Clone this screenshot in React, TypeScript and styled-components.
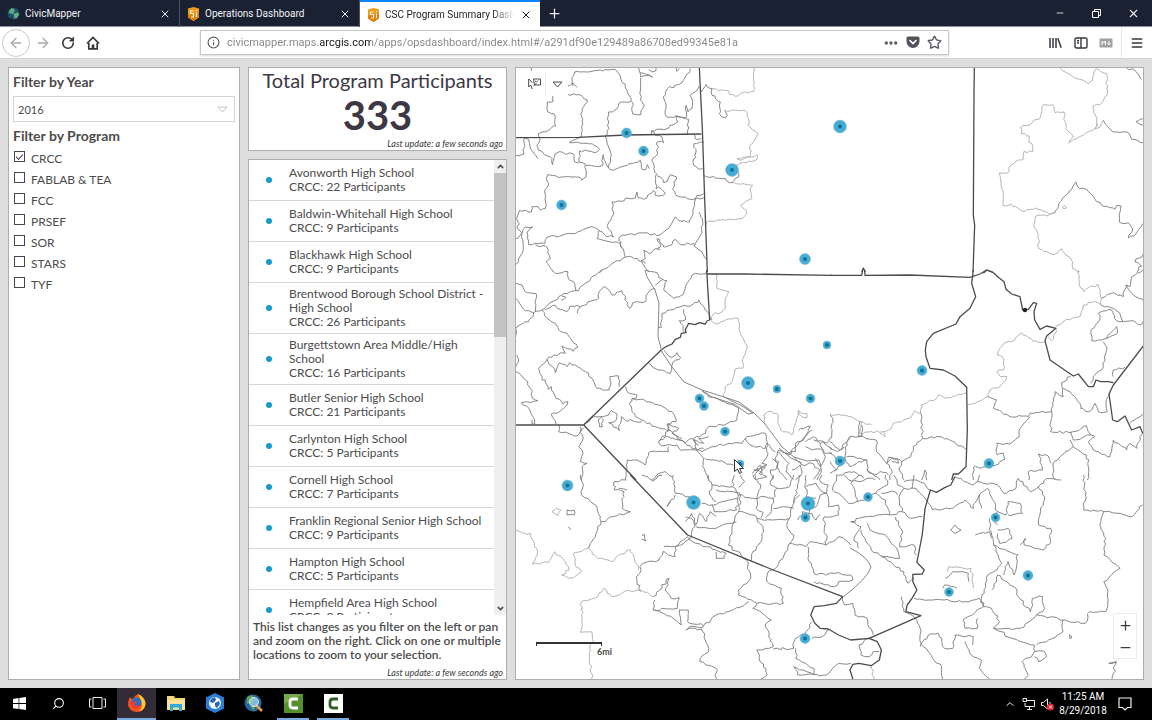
import React, { useState } from "react";
import styled, { createGlobalStyle, css } from "styled-components";
import {
  ArrowLeft,
  ArrowRight,
  ChevronDown,
  ChevronUp,
  Ellipsis,
  Info,
  Menu,
  Minus,
  Plus,
  RotateCw,
  Search,
  Star,
  X,
} from "lucide-react";

const ui = 'Roboto, "Open Sans", sans-serif';
const dash = 'Lato, "Open Sans", sans-serif';

const GlobalStyle = createGlobalStyle`
  *, *::before, *::after { box-sizing: border-box; }
  body { margin: 0; background: #dedede; font-family: ${dash}; color: #4c4c4c; }
  button, input, select { font: inherit; color: inherit; }
  button { border: 0; padding: 0; background: none; display: flex; align-items: center; justify-content: center; }
  h1, h2, p, ul, fieldset { margin: 0; padding: 0; border: 0; }
`;

const Window = styled.div`
  display: flex;
  flex-direction: column;
  height: 100vh;
  min-height: 480px;
`;

/* ---------- browser chrome ---------- */

const TabBar = styled.div`
  display: flex;
  flex: none;
  height: 27px;
  background: #1a2133;
  border-bottom: 1px solid #8d8f94;
  color: #f2f2f4;
  font: 10px/26px ${ui};
`;

const Tab = styled.div<{ $active?: boolean }>`
  display: flex;
  align-items: center;
  flex: 0 1 180px;
  min-width: 0;
  height: 27px;
  padding: 0 8px 0 7px;
  gap: 5px;
  border-right: 1px solid #4c5261;
  svg { flex: none; }
  ${(p) =>
    p.$active &&
    css`
      background: #fff;
      color: #1b1b1f;
      border-top: 2px solid #0a84ff;
      border-right: 0;
    `}
`;

const TabTitle = styled.span<{ $fade?: boolean }>`
  flex: 1;
  min-width: 0;
  overflow: hidden;
  white-space: nowrap;
  ${(p) => p.$fade && "mask-image: linear-gradient(90deg, #000 82%, transparent);"}
`;

const Spacer = styled.div`
  flex: 1;
`;

const NewTab = styled.button`
  width: 28px;
  height: 26px;
`;

const WindowButton = styled.button`
  width: 37px;
  height: 26px;
`;

const NavBar = styled.div`
  display: flex;
  align-items: center;
  flex: none;
  height: 32px;
  padding-right: 3px;
  background: #fff;
  border-bottom: 1px solid #d2d2d4;
  color: #38353f;
`;

const NavButton = styled.button<{ $dim?: boolean; $ring?: boolean }>`
  width: 25px;
  height: 26px;
  flex: none;
  color: ${(p) => (p.$dim ? "#a9a9ac" : "inherit")};
  ${(p) => p.$ring && "width: 28px; height: 28px; margin-left: 2px; border: 1px solid #c9c9cb; border-radius: 50%;"}
`;

const AddressBox = styled.div`
  display: flex;
  align-items: center;
  flex: 1;
  height: 25px;
  margin: 0 94px 0 95px;
  padding: 0 6px;
  gap: 7px;
  border: 1px solid #c3c6ca;
  box-shadow: 0 1px 2px #d9d9db;
  color: #58565e;
`;

const AddressInput = styled.input`
  flex: 1;
  min-width: 0;
  height: 22px;
  border: 0;
  padding: 0;
  outline: 0;
  font: 11px/22px ${ui};
  color: transparent;
  background: linear-gradient(90deg, #84848a 93px, #17171b 93px, #17171b 144px, #84848a 144px);
  -webkit-background-clip: text;
  background-clip: text;
`;

const MenuSlot = styled.div`
  display: flex;
  align-items: center;
  height: 31px;
  margin-left: 3px;
  padding-left: 2px;
  border-left: 1px solid #e8e8ea;
`;

/* ---------- dashboard ---------- */

const Dashboard = styled.main`
  flex: 1;
  min-height: 0;
  display: grid;
  grid-template-columns: 232fr 259fr 629fr;
  gap: 8px;
  padding: 8px;
`;

const Panel = styled.section`
  position: relative;
  min-width: 0;
  min-height: 0;
  background: #fff;
  border: 1px solid #adadad;
  overflow: hidden;
`;

const FilterPanel = styled(Panel)`
  padding: 5px 4px;
`;

const FilterLabel = styled.label`
  display: block;
  font-size: 14px;
  line-height: 18px;
  font-weight: 700;
`;

const FilterLegend = styled.legend`
  padding: 0;
  font-size: 14px;
  line-height: 18px;
  font-weight: 700;
`;

const SelectBox = styled.div`
  display: grid;
  align-items: center;
  margin: 5px 0 5px;
  svg { grid-area: 1 / 1; justify-self: end; margin-right: 7px; pointer-events: none; }
`;

const YearSelect = styled.select`
  grid-area: 1 / 1;
  appearance: none;
  width: 100%;
  height: 26px;
  padding: 0 4px;
  border: 1px solid #d4d4d4;
  border-radius: 0;
  background: #fff;
  font-size: 11px;
`;

const CheckRow = styled.label`
  display: flex;
  align-items: flex-start;
  height: 21px;
  gap: 6px;
  padding-left: 1px;
  font-size: 12px;
  line-height: 20px;
`;

const CheckList = styled.div`
  padding-top: 4px;
`;

const CheckBox = styled.input`
  appearance: none;
  flex: none;
  width: 11px;
  height: 11px;
  margin: 2px 0 0;
  border: 1px solid #4a4450;
  background: #fff;
  display: grid;
  place-items: center;
  &:checked::before {
    content: "";
    width: 7px;
    height: 4px;
    margin-bottom: 2px;
    border: solid #4a4450;
    border-width: 0 0 1px 1px;
    transform: rotate(-45deg);
  }
`;

const MiddleColumn = styled.div`
  display: flex;
  flex-direction: column;
  gap: 8px;
  min-height: 0;
  min-width: 0;
`;

const TotalPanel = styled(Panel)`
  flex: none;
  height: 84px;
  display: flex;
  flex-direction: column;
  align-items: center;
  color: #3d3844;
`;

const TotalTitle = styled.h1`
  font-size: 20px;
  line-height: 24px;
  font-weight: 400;
  white-space: nowrap;
`;

const TotalValue = styled.p`
  font-size: 40px;
  line-height: 46px;
  font-weight: 700;
`;

const Updated = styled.p`
  align-self: flex-end;
  padding-right: 3px;
  font-size: 9px;
  line-height: 12px;
  font-style: italic;
  color: #3a3a3a;
  text-align: right;
`;

const ListPanel = styled(Panel)`
  flex: 1;
  display: flex;
  flex-direction: column;
`;

const ListArea = styled.div`
  flex: 1;
  min-height: 0;
  display: flex;
`;

const SchoolList = styled.ul`
  flex: 1;
  overflow: hidden;
  list-style: none;
`;

const SchoolRow = styled.li`
  display: flex;
  align-items: center;
  min-height: 41px;
  padding: 4px 8px 4px 17px;
  gap: 17px;
  border-bottom: 1px solid #d5d7d9;
  font-size: 12px;
  line-height: 14px;
  &::before {
    content: "";
    flex: none;
    width: 6px;
    height: 6px;
    border-radius: 50%;
    background: #1b9bcb;
  }
`;

const ScrollTrack = styled.div`
  flex: none;
  display: flex;
  flex-direction: column;
  width: 12px;
  background: #efefef;
`;

const ScrollButton = styled.button`
  height: 13px;
  flex: none;
`;

const ScrollThumb = styled.div`
  flex: 0 0 36%;
  background: #c3c3c3;
`;

const ListNote = styled.p`
  padding: 5px 4px 5px;
  font-size: 12px;
  line-height: 14px;
  font-weight: 600;
`;

/* ---------- map ---------- */

const MapSvg = styled.svg`
  display: block;
  width: 100%;
  height: 100%;
  fill: none;
  stroke-linejoin: round;
  path { vector-effect: non-scaling-stroke; }
`;

const MapTools = styled.div`
  position: absolute;
  top: 4px;
  left: 8px;
  display: flex;
  align-items: center;
  height: 24px;
  background: #fff;
`;

const MapTool = styled.button`
  width: 22px;
  height: 22px;
  border-right: 1px solid #ececec;
  & + & { border-right: 0; }
`;

const ZoomBox = styled.div`
  position: absolute;
  right: 6px;
  bottom: 20px;
  width: 24px;
  background: #fff;
  border: 1px solid #ececec;
  color: #3e3a44;
  button { width: 22px; height: 22px; }
`;

const ScaleBar = styled.div`
  position: absolute;
  left: 20px;
  bottom: 22px;
  width: 76px;
  font: 700 9px/11px ${dash};
  text-align: right;
  &::before {
    content: "";
    display: block;
    width: 66px;
    height: 4px;
    border: 2px solid #333;
    border-width: 2px 1px 0;
  }
`;

type Tile = { at: string; rough: string[]; pale: string[]; bold: string[] };

const tiles: Tile[] = [
  {
    at: "translate(512 62) scale(.33333)",
    rough: [
      "58,18 58,26",
      "168,72 182,62 196,76",
      "183,72 180,52 188,30 230,30 290,24 310,22 325,42 345,85 358,118 328,120 315,140 290,150 286,170 291,200 280,225 288,250 298,280 290,316 304,325 350,306 385,295 390,322 400,324 406,308 412,320",
      "168,97 200,98 226,114 210,150 208,225 172,242 240,245 263,262 255,270 203,266 201,300 220,306 222,345 210,355 200,345 150,345 107,338 104,352 110,365 98,385 100,440 85,445 78,434 60,434 58,450 40,445 22,446 14,470 22,485 16,500 30,515 32,570 20,590 12,608",
      "124,100 124,118 106,120 108,150 126,155 131,192 90,210 79,215 82,240 75,250 80,265 120,290 122,308 130,275 150,270 158,275 183,275 188,300 200,303",
      "12,280 36,276 38,228 50,232 62,268 78,290",
      "222,310 270,312 274,278 280,300 290,318",
      "380,18 386,45 412,40 422,46 400,36 383,34",
      "386,48 386,115 397,130 386,158 362,156 360,120",
      "410,22 420,30 432,26 432,18",
      "492,18 495,28 502,20",
      "535,20 520,45 500,68 466,80 454,105 462,128 460,158 472,166 495,162 497,180 470,198 420,206 418,216",
      "562,72 550,90 534,100 542,118 540,140 528,150 522,130 524,165 490,162",
      "495,162 530,172 526,216",
      "568,90 582,68 600,80 600,100 625,120 622,155 640,168 646,160 638,145",
      "575,340 630,350 660,362 680,345 675,310",
      "575,240 546,245 552,270 545,310 560,322 572,320",
      "548,218 550,230 568,230",
      "418,206 430,220 450,225 455,242 436,240 437,275 420,295 428,330 455,362 466,358 475,338 494,345 482,380 492,400 535,412 555,408 576,408",
      "575,395 555,400 548,430 532,480 500,475 490,465 470,500 445,518 420,518 405,512 330,520 320,535 330,560",
      "430,340 432,380 440,375 460,395 440,402 430,400 425,385 395,412 380,408 375,390 370,408 340,408 330,418 300,420 306,455 286,490 305,525 285,524 255,500 240,494 180,515 150,520 105,526 98,545 50,548 45,510 62,495 40,495 24,520 12,530",
      "70,548 105,555 115,590 103,600 125,630",
      "262,505 255,530 310,540 325,545 340,585 360,585 390,600 410,630",
      "340,585 300,605 262,630",
      "435,560 445,555 435,530 455,555 480,548 490,532 505,548 545,545 570,570 582,590",
      "560,450 572,470 565,520 548,550",
      "412,575 395,565 400,590 388,596 400,605",
      "412,575 430,560 445,562",
    ],
    pale: [
      "600,80 640,85 670,103 700,90 725,88 727,18",
      "638,145 700,146 712,180 708,190 738,216 715,250 714,285 675,290 690,293 735,278 735,292 700,303 660,310",
      "660,362 722,370 714,385 720,410 685,430 705,448 690,470 660,472 590,478 582,490",
    ],
    bold: ["562,18 571,200 578,410 586,630", "12,227 200,226 340,219 568,216"],
  },
  {
    at: "translate(830 62) scale(.33333)",
    rough: [
      "820,175 830,190 850,210 895,212 905,232 940,242",
      "660,457 675,452 695,415 725,382 738,360 748,380 770,382 815,430 855,442 860,430 873,432 868,480 895,482 908,500 895,528 912,522 938,485",
      "890,18 915,25 935,52",
      "940,170 918,178 940,190",
      "940,575 915,600 935,612 920,630",
    ],
    pale: [
      "690,18 730,45 775,65 788,55 792,30 803,20 830,35 830,100 815,122 790,132 800,180 795,200 803,185",
      "820,175 810,195 795,200 760,220 716,243 730,222 708,200 702,150 675,152 668,128 640,128 632,165 610,175 600,188 572,195 574,215 598,222 596,240 606,245 608,270 582,268 582,290 558,298 536,318 534,332 508,333 515,380 520,400 518,430 545,427 582,450 615,438 660,457 615,465 612,495 625,520 626,560 675,577 695,560 705,575 728,600 728,620 750,630",
      "697,435 704,430 710,438 700,440 697,435",
    ],
    bold: ["433,18 432,100 430,460 434,490 429,630", "95,630 100,618 106,630", "460,634 470,624 488,630"],
  },
  {
    at: "translate(512 270) scale(.33333)",
    rough: [
      "120,0 130,10 168,5 172,30 185,35 192,62 150,75 120,95 90,120 65,128 40,122 12,85",
      "272,0 245,18 200,62 192,62",
      "12,40 30,45 40,65 72,70 70,125",
      "65,128 50,155 15,170 12,215",
      "90,120 105,145 130,160 140,180 165,190 197,232 183,244 150,228 160,250 125,255 105,268 130,308 142,278 165,290 172,278 220,305 240,325 255,355 292,360 296,345 294,320 320,318 322,350",
      "105,268 80,295 90,330 100,330 108,358 118,350 128,375 152,402 168,395 165,405 135,430 118,432 132,462",
      "98,120 130,106 145,118 165,125 180,108 205,110 260,85 262,65 280,50 300,75 330,62 352,115 372,95 400,95 402,78 415,60 430,58",
      "150,78 162,82 148,90",
      "205,110 196,130",
      "400,0 435,8 440,22 465,32 455,60 485,85 515,72 525,40 550,10 572,12 584,5",
      "430,45 450,30",
      "450,130 495,112 540,105 560,90 590,130 600,150",
      "450,130 448,172 438,172",
      "515,118 520,150 502,152 518,188",
      "455,240 480,262 495,248 506,262 480,285 475,310 440,300 410,280",
      "12,290 20,275 14,255",
      "12,305 40,330 55,355 62,385 78,392 28,398 55,425 68,450 68,462 60,462 60,450",
      "570,362 600,382 680,412 675,450 630,465 590,470 580,490 545,505 555,540 575,535",
      "340,350 345,365 375,375 372,385 360,385 352,400 360,425 380,445 430,470 475,482 520,520 555,542",
      "360,385 385,388 440,405 480,425 492,455 465,462 470,482 440,515 450,528 495,525 505,540 555,540 570,545 600,530 650,520 690,520 705,500 760,490 765,515",
      "215,465 245,440 290,435 298,422 315,432 308,455 290,458 322,482 328,440 340,450 390,455",
      "270,440 258,450 262,470 272,470 270,445",
      "140,465 140,485 195,498 215,475",
      "205,470 212,510 200,530 213,550 206,575 225,580 210,590 213,610 208,630",
      "340,630 345,570 375,570 400,585 410,548 470,545 470,530",
      "420,630 440,610 460,605 480,620",
      "555,542 575,565 572,590 590,630",
      "578,565 610,570 665,585",
      "860,480 895,468 870,510 830,555 800,540",
      "765,515 765,560 750,580 765,585 740,600 728,615 730,630",
      "720,610 745,585 750,610 730,600",
      "725,600 760,590 742,612 765,620 735,628",
      "800,540 790,570 800,600 825,630",
      "820,550 850,545 850,520 875,510 900,480",
      "925,520 940,560 925,590 910,565",
      "905,510 935,515 960,540",
      "920,570 928,600 915,630",
      "840,600 865,585 870,610 850,630",
      "545,510 575,520 560,505 590,500",
      "700,505 715,525 760,535 765,520 790,545",
      "440,515 470,500 500,510 520,520 540,505 560,525",
      "475,482 470,460 500,475 480,490 510,505",
      "795,545 830,580 822,605 845,628",
      "845,560 870,585 900,580 925,600 905,628",
      "880,515 905,500 925,520 950,515 960,500",
      "780,565 800,575 795,595 775,600 780,628",
      "880,530 900,540 930,538 940,550 960,552",
    ],
    pale: [
      "600,12 615,15 615,55 650,65 640,85 640,115 628,128 605,132 595,150 612,162 645,148 678,145 685,190 705,225 695,260 692,295 670,297 660,335 640,352 635,380",
      "760,462 755,435 768,425 795,430 805,480 840,495 860,420",
      "860,420 870,430 885,430 885,442 870,440 860,425",
    ],
    bold: ["584,0 593,150", "215,465 12,465", "215,465 372,630", "584,12 700,12 960,16", "593,150 585,153 580,162 562,158 550,164 530,160 526,168 520,178 522,188 508,190 505,202 490,208 480,222 462,230 450,238 215,465"],
  },
  {
    at: "translate(830 270) scale(.33333)",
    rough: [
      "940,0 905,20 900,50 888,45 880,80 850,68 815,85",
      "890,45 905,70 940,92",
      "812,105 835,110 870,130 880,155 860,152 845,120 805,130 810,148 785,178 785,212 830,205 860,170 862,190 830,205",
      "880,155 910,152 930,165 940,152",
      "820,215 830,230 820,290 790,320 782,340",
      "472,380 500,390 490,415 540,440 595,440 600,430 665,425 662,485 720,488 770,468 782,495 730,510 722,485",
      "600,440 570,475 568,500 540,522 500,520 502,555 520,550 525,568 480,592 430,592 430,630",
      "665,425 675,365 700,380 695,338 722,320",
      "700,355 720,365 750,400 752,415 778,425 795,400 805,425 832,425 828,395 840,370",
      "782,495 795,500 775,515 790,540 840,560 850,510 865,520 890,540 900,520 920,535 930,500 938,490",
      "730,530 770,555 775,590 772,630",
      "720,510 730,530 690,560 670,580 668,610 675,630",
      "665,580 655,558 625,552 638,600 595,605 597,630",
      "900,460 938,432",
      "850,320 850,300 885,292",
      "272,430 278,505 250,530 242,560 215,575 185,565 170,580 140,545 138,510 100,500 60,500 50,515 45,560 20,600 0,610",
      "0,435 8,445 5,500 0,505",
      "0,515 30,540 42,530",
      "278,505 330,500 370,515 410,540",
      "50,560 72,560 110,570 112,600 150,630",
      "20,615 72,605 100,625",
      "170,580 185,600 180,630",
      "215,575 208,600 222,630",
      "275,630 285,600 290,630",
      "0,575 20,600",
      "90,455 85,500 95,500 95,465",
      "0,530 22,545 45,520 60,500",
      "45,560 60,590 85,575 110,570",
      "110,600 135,615 150,605 175,615",
      "170,580 175,562 200,565 205,580 185,575",
      "0,545 15,560 30,590",
    ],
    pale: [
      "745,0 748,45 760,65 803,42 812,80 812,105",
      "677,172 710,148 750,140 760,105 790,95 812,105",
      "645,215 610,215 575,188 545,215 518,225 502,255 522,270 520,300 500,305 512,320 530,320 510,350 480,360 472,380 435,400 412,405",
      "680,180 665,212 655,200",
      "0,432 60,440 95,455 125,465",
      "95,455 90,490 160,485 165,500 150,490",
      "160,485 185,475 190,460 240,445 255,422 272,430 275,405 320,385 325,375 345,385 370,378 410,370",
    ],
    bold: [
      "0,16 95,16 98,0",
      "104,0 105,16 240,15 420,22 450,12 470,0 490,8 505,22 522,35 528,58 545,72 570,80 578,120 595,118 610,98 620,100 612,125 614,150 630,178 650,168 678,175 650,198 645,212 660,270 730,318 745,312 775,350 790,350 798,330 812,335 835,335 850,338",
      "430,0 425,40 437,80 420,115 390,140 378,162 310,190 290,215 286,240 288,260 300,295 340,300 375,318 410,352 412,480 408,590 385,612 370,612 365,630",
      "940,228 850,345 837,372 848,450 862,455 885,438 905,480 930,470 938,490",
    ],
  },
  {
    at: "translate(512 475) scale(.40816 .33333)",
    rough: [
      "168,0 175,30 170,60 205,90 218,140 188,220",
      "218,140 290,110 270,100 275,50 250,45 250,20 280,15",
      "262,40 282,45",
      "135,105 152,105 152,120 135,120 135,105",
      "138,155 144,165",
      "318,182 325,178 328,198 318,192",
      "315,350 305,310 320,265 360,255 370,230 400,245 400,215 430,185",
      "345,365 385,310 375,345 390,370 410,368 405,400 345,405 350,375",
      "350,405 395,430 415,450 410,405 432,405 430,440 470,452 500,420 530,410 580,380",
      "425,465 435,455 470,455",
      "430,460 465,462 482,520 460,560 500,580 502,612",
      "430,185 450,205 500,225 525,235 520,250 500,250 500,230",
      "372,215 410,212 440,185 448,155 440,130 425,125",
      "395,0 400,55 435,65",
      "318,0 345,18 368,0",
      "400,60 380,95 390,80",
      "465,85 490,90 495,110 550,105 555,60 590,70 620,65 640,70 650,40 680,35 690,0",
      "480,0 490,30 485,60 500,80",
      "490,30 540,35 545,0",
      "500,45 540,50 555,62",
      "540,35 560,65 555,110 590,120 600,130 640,135 680,130 690,85 705,60",
      "490,90 530,75 552,70",
      "425,140 440,115 450,150 460,115 475,140 485,110 500,125",
      "450,155 500,160 530,145 550,140",
      "555,110 540,150 530,210 575,255 585,310 555,345 555,360 600,385 665,385 660,340 625,320 628,290 650,275 680,205 720,215 730,200 770,210 800,185 830,210",
      "600,130 615,160 610,200 590,230 585,260",
      "680,130 675,160 690,180 680,205",
      "640,70 635,110 620,130",
      "600,70 598,100 615,112 610,128",
      "640,100 665,95 690,100",
      "705,0 700,40 690,85",
      "590,0 610,30 600,68",
      "560,0 570,20 555,38",
      "640,0 632,25 650,40",
      "725,215 725,250 745,300 790,295 830,300 835,315 800,320 790,335 740,320",
      "725,120 730,100 745,95 755,60 770,55 775,95 800,90 800,120 765,125 770,210",
      "700,135 712,110 735,115 745,135 755,118",
      "720,0 720,65 745,70",
      "720,35 745,25 760,50 770,55",
      "760,0 755,20 775,30 770,55",
      "795,0 785,45 800,55 825,85 845,80 840,45 830,25 850,0",
      "815,0 825,15 850,20 870,10 890,15",
      "845,80 865,75 890,55 915,75 925,120 870,125 830,140 855,155 838,190 850,220",
      "870,145 885,170 915,180 945,225 950,250 900,240 880,225 865,190 855,165",
      "890,55 905,40 920,30 915,0",
      "925,120 955,110 980,130 1005,125",
      "955,110 950,60 960,40 990,40 1005,60 1015,75",
      "905,55 930,48 945,60",
      "935,0 945,30 960,40",
      "985,0 980,40",
      "960,20 985,15 1010,25 1025,45",
      "940,125 955,165 950,215 985,210 990,240",
      "905,245 935,270 960,290 970,325 985,310",
      "1085,5 1130,30 1140,20 1190,30 1205,55 1235,40 1240,10",
      "1145,0 1140,20",
      "1240,10 1270,50 1290,35 1310,10 1345,15",
      "1015,75 1030,105 1080,100 1110,75 1130,100 1145,60 1165,40 1190,110 1180,130 1190,150",
      "1145,60 1150,100",
      "1290,35 1305,65 1295,110 1290,150 1320,160 1320,200 1300,225 1255,210 1258,190 1245,210",
      "1190,110 1210,120 1215,80 1245,85 1250,115 1215,120",
      "1075,165 1085,150 1100,165 1085,175 1075,165",
      "1190,165 1215,160 1225,190 1195,205 1190,175",
      "1135,180 1170,170 1175,190",
      "1170,130 1175,180 1180,210 1200,265 1180,290 1165,300 1150,370 1155,395",
      "1180,210 1240,240 1230,300 1215,260 1205,300",
      "1175,345 1190,300 1235,340 1240,365 1270,410 1275,370 1300,365 1305,400 1285,420 1350,435 1405,445 1415,410 1455,410 1460,350 1450,320 1490,280 1450,240 1455,190 1440,150 1450,110 1400,105 1405,60 1400,0",
      "1450,110 1490,115 1520,125 1545,90",
      "1062,310 1080,290 1118,295 1120,320",
      "1055,340 1060,330 1090,340",
      "985,370 1020,375 1060,375 1110,380 1145,370 1155,395 1175,400 1195,440 1180,460 1245,460 1285,420",
      "955,365 960,410 985,425 1000,460 1000,500 1030,550 1052,575 1055,612",
      "1000,515 1020,480 1045,475 1060,520 1080,520 1085,480 1130,485 1128,510",
      "1155,395 1105,435 1110,460 1140,460 1140,430",
      "1180,460 1225,490 1280,510 1275,540 1250,560 1265,600 1255,612",
      "1280,530 1305,530 1310,545 1290,560 1280,545",
      "1110,500 1125,540 1150,555 1145,580 1170,612",
      "1350,435 1350,470 1310,500 1285,510",
      "1365,480 1372,485 1368,492 1365,480",
      "1482,562 1462,565 1480,560 1470,612",
      "600,385 590,400 635,435 620,450 640,515 600,525 625,600 610,612",
      "640,522 690,520 695,490 720,470 735,440",
      "695,520 695,550 740,580 740,600 690,575 700,600 770,600 800,565 830,565",
      "735,490 760,485 780,462",
      "810,365 815,390 835,385 840,420 870,430 885,480",
      "875,490 850,510 855,540 875,545 885,530 900,530",
    ],
    pale: [
      "188,220 150,235 155,270 170,290 140,310 122,300 140,285 130,260 105,230 90,262 50,268 62,240 45,175 30,175 10,165",
      "188,220 210,250 245,260 262,240 290,225 300,250 310,285",
      "98,110 108,100 120,105 112,122 98,110",
      "168,472 172,430 170,380 210,365 225,340 245,365 275,350 315,345 345,365",
      "168,472 195,470 200,500 190,520 195,612",
      "1068,290 1070,275 1125,280 1128,320 1130,340",
      "880,572 888,612",
    ],
    bold: [
      "290,0 430,180 640,285 810,365",
      "810,365 795,385 765,392 740,395 732,420 742,445 755,460 775,462 800,480 830,495 875,490 895,500 905,525 900,555 880,572 850,565 835,568 828,585 835,612",
      "875,490 1002,422 965,410 968,390 980,370 992,345 982,320 982,298 1005,297 1010,285 992,262 1005,180 1012,100 1025,45 1040,52 1060,38 1075,30 1085,5",
    ],
  },
];

// Smooth watercourses shared by several districts.
const rivers = [
  "M645 270L647 277L655 290L659 303L658 337L662 352L672 367L684 382L702 390L724 397L739 402L754 413L765 424L782 447L794 457L807 461L819 460",
  "M702 391L712 397L734 404L748 414L753 413L742 406L724 397",
  "M779 448L791 458L802 463",
  "M850 548Q868 557 871 567Q868 578 843 597",
];

// Breaks long segments into short irregular steps, like a surveyed boundary.
const coast = (line: string, seed: number) => {
  const points = line.split(" ").map((p) => p.split(",").map(Number));
  let state = seed * 97 + 13;
  const noise = () => {
    state = (state * 1103515245 + 12345) % 2147483648;
    return state / 2147483648 - 0.5;
  };
  let d = `M${points[0][0]} ${points[0][1]}`;
  for (let i = 1; i < points.length; i++) {
    const [x0, y0] = points[i - 1];
    const [x1, y1] = points[i];
    const length = Math.hypot(x1 - x0, y1 - y0);
    const steps = Math.max(1, Math.round(length / 9));
    for (let s = 1; s < steps; s++) {
      const t = s / steps;
      d += `L${(x0 + (x1 - x0) * t + noise() * 7).toFixed(1)} ${(y0 + (y1 - y0) * t + noise() * 7).toFixed(1)}`;
    }
    d += `L${x1} ${y1}`;
  }
  return d;
};

const straight = (line: string) => "M" + line.split(" ").join("L");

const sites = [
  [626.5, 133, 5], [643.5, 151, 5], [561.5, 205, 5], [732, 170, 6.5], [840, 126.5, 6.5], [805, 259, 5.5],
  [827, 345, 4], [922, 370.5, 5], [748, 383, 6.5], [777, 389, 4], [810.5, 398.5, 4.5], [699.5, 398.5, 4.5],
  [704, 406, 4.5], [725, 431.5, 4.5], [740, 464, 4], [840, 461, 5], [989, 463.5, 5], [567.5, 485.5, 5.5],
  [693.5, 502.5, 7], [808, 503.5, 7], [805.5, 517.5, 4.5], [868, 497, 4.5], [995.5, 517.5, 4.5],
  [1028, 575.5, 5], [949, 592, 4.5], [805, 638.5, 5],
];

const DistrictMap = () => (
  <MapSvg viewBox="516 68 627 611" preserveAspectRatio="xMidYMid slice" role="img" aria-label="School locations">
    {tiles.map((tile, t) => (
      <g key={t} transform={tile.at}>
        {tile.pale.map((line, i) => (
          <path key={i} d={coast(line, i + t)} stroke="#adadad" strokeWidth="0.9" />
        ))}
        {tile.rough.map((line, i) => (
          <path key={i} d={coast(line, i + t)} stroke="#7a7a7a" strokeWidth="0.9" />
        ))}
        {tile.bold.map((line, i) => (
          <path key={i} d={straight(line)} stroke="#4b4a4f" strokeWidth="1.3" />
        ))}
      </g>
    ))}
    {rivers.map((d) => (
      <path key={d} d={d} stroke="#868686" strokeWidth="1" />
    ))}
    <circle cx="1025" cy="310" r="2.2" fill="#222" />
    {sites.map(([x, y, r]) => (
      <g key={`${x}-${y}`}>
        <circle cx={x} cy={y} r={r} fill="#43add8" stroke="#8fb9c9" strokeWidth="0.5" />
        <circle cx={x} cy={y} r="2" fill="#12708f" />
      </g>
    ))}
    <path d="M734.500 459.500v12l3-2.500 2 4.500 2-1-2-4h4z" fill="#fff" stroke="#333" strokeWidth="1" />
  </MapSvg>
);

/* ---------- taskbar ---------- */

const Taskbar = styled.footer`
  display: flex;
  align-items: center;
  flex: none;
  height: 32px;
  background: #000;
  color: #fff;
`;

const TaskButton = styled.button<{ $running?: boolean; $current?: boolean }>`
  width: 39px;
  height: 32px;
  border-bottom: 2px solid transparent;
  ${(p) => p.$running && "width: 32px; margin-left: 4px; margin-right: 4px; border-color: #76a9dc;"}
  ${(p) => p.$current && "border-color: #76a9dc; background: #332c36;"}
`;

const TrayButton = styled.button`
  width: 19px;
  height: 32px;
`;

const Clock = styled.div`
  width: 52px;
  margin-right: 4px;
  font: 10px/14px ${ui};
  text-align: center;
`;

const Notices = styled(TrayButton)`
  width: 24px;
  margin-right: 15px;
`;

const GlobeIcon = () => (
  <svg width="13" height="13" viewBox="0 0 13 13">
    <circle cx="6.500" cy="6.500" r="6" fill="#1b4766" />
    <path d="M2 4l3-3 3 2-2 3-3 1zM7 7l4-2 1 3-3 4-2-2z" fill="#62b06b" />
    <path d="M1 6l11 1M6 1l1 11M2 10l8-7M3 2l8 8" stroke="#57b4df" strokeWidth=".6" strokeDasharray="1 1" />
  </svg>
);

const DashboardIcon = () => (
  <svg width="13" height="14" viewBox="0 0 13 14">
    <path d="M1 1.500L6.500 0 12 1.500v9L6.500 14 1 10.500z" fill="#f0991b" />
    <path d="M1 8l11-3v5.500L6.500 14 1 10.500z" fill="#dd7f0c" />
    <path d="M6.500 4H3.500v2.500h3V10H4M9.500 3v1M9.500 5.500V10" stroke="#fff3da" strokeWidth="1.200" fill="none" />
  </svg>
);

const HomeIcon = () => (
  <svg width="14" height="14" viewBox="0 0 14 14" fill="none" stroke="currentColor" strokeWidth="1.700">
    <path d="M1 7.500L7 1.500l6 6M2.800 7v5.800h8.400V7" />
    <path d="M7 13V8.500" strokeWidth="2.600" />
  </svg>
);

const PocketIcon = () => (
  <svg width="14" height="13" viewBox="0 0 14 13">
    <path d="M2 .5h10Q13.500.5 13.500 2v3.500a6.500 6.500 0 0 1-13 0V2Q.5.5 2 .5z" fill="#55525b" />
    <path d="M4 4.500l3 3 3-3" stroke="#fff" strokeWidth="1.600" fill="none" strokeLinecap="round" />
  </svg>
);

const LibraryIcon = () => (
  <svg width="13" height="12" viewBox="0 0 13 12" stroke="currentColor" strokeWidth="1.500">
    <path d="M1 1v10M4 1v10M7 1v10M8.800 1.200l3.400 9.600" />
  </svg>
);

const SidebarIcon = () => (
  <svg width="14" height="12" viewBox="0 0 14 12" stroke="currentColor" fill="none" strokeWidth="1.400">
    <rect x="1" y="1" width="12" height="10" rx="1.500" />
    <path d="M7 1v10M3 3.800h2M3 6h2" />
  </svg>
);

const MarkdownIcon = () => (
  <svg width="14" height="10" viewBox="0 0 14 10">
    <rect x=".5" y=".5" width="13" height="9" rx="1" fill="#a1a1a4" />
    <path d="M3 7V3l1.700 2L6.400 3v4M10 3v3.500M8.500 5.200L10 6.800l1.500-1.600" stroke="#fff" fill="none" />
  </svg>
);

const RestoreIcon = () => (
  <svg width="9" height="9" viewBox="0 0 9 9" fill="none" stroke="#fff">
    <path d="M.5 2.500h6v6h-6zM2.500 2V.5h6v6H7" />
  </svg>
);

const DropArrow = ({ color }: { color: string }) => (
  <svg width="11" height="7" viewBox="0 0 11 7" fill="none" stroke={color}>
    <path d="M1 1h9L5.500 6z" />
  </svg>
);

const SelectToolIcon = () => (
  <svg width="13" height="12" viewBox="0 0 13 12" fill="none" stroke="#4a4a4a">
    <path d="M.7 1v8l2-2 1.500 4M4.500 5L1 1M5.500 1h7v6h-6zM7 3l1.500 1L10 2.500M5.500 8l3-3" />
  </svg>
);

const WindowsIcon = () => (
  <svg width="13" height="13" viewBox="0 0 13 13" fill="#fff">
    <path d="M0 1.900L5.600 1v5.100H0zM6.300.9L13 0v6.100H6.300zM0 6.900h5.600V12L0 11.200zM6.300 6.900H13V13l-6.700-.9z" />
  </svg>
);

const TaskViewIcon = () => (
  <svg width="17" height="12" viewBox="0 0 17 12" fill="none" stroke="#eee">
    <path d="M4 .5h9v11H4zM2.500 2H.5v8h2M14.500 2h2v8h-2" />
  </svg>
);

const FirefoxIcon = () => (
  <svg width="20" height="20" viewBox="0 0 20 20">
    <path d="M3 4l1.500 2 2.500-1L8 3l3-2 3 2 3 3q2 3 1.500 6-1.500 7-8.500 7-7 0-8.800-6.500Q.5 8 3 4z" fill="#f4581d" />
    <path d="M11 1q7 3 7.500 10-1 6-6.500 7.500 4-4 2.500-9Q13 5 11 1z" fill="#ffca2e" />
    <circle cx="9.500" cy="9.500" r="5" fill="#2a6cc2" />
    <path d="M3 8l4 1 3-1-1 2-2 1q2 3 6 1 0 3-4 4-5-.5-6-8z" fill="#ef3b2a" />
  </svg>
);

const FolderIcon = () => (
  <svg width="18" height="16" viewBox="0 0 18 16">
    <path d="M0 1h7l1 2h10v12H0z" fill="#f6d573" />
    <path d="M0 5h18v9H0z" fill="#fbe39a" />
    <path d="M3 16V9h12v7h-3v-3.500H6V16z" fill="#35a8dc" />
  </svg>
);

const ArcIcon = () => (
  <svg width="18" height="20" viewBox="0 0 18 20">
    <path d="M9 0l9 4.500v11L9 20l-9-4.500v-11z" fill="#2b80d5" />
    <circle cx="9" cy="10" r="6" fill="#f3f8fb" />
    <path d="M5 6l4-2 1 3-3 3-3-1zM9 10l4-2 1 3-3 4-2-2z" fill="#2867ad" />
  </svg>
);

const GlobeSearchIcon = () => (
  <svg width="20" height="20" viewBox="0 0 20 20">
    <circle cx="9" cy="10" r="8.500" fill="#2468a0" />
    <path d="M3 4l5-2 3 4-3 4-5 1zM6 13l5-1-1 6z" fill="#5aa661" />
    <path d="M12 12l6 6" stroke="#e2a14d" strokeWidth="2.500" />
    <circle cx="10" cy="9" r="4.500" fill="#9fd3e9" fillOpacity=".75" stroke="#dce6ea" />
  </svg>
);

const CamtasiaIcon = ({ light }: { light?: boolean }) => (
  <svg width="19" height="19" viewBox="0 0 19 19">
    <path d="M0 0h19v19H0z" fill={light ? "#fff" : "#55902f"} />
    <path d="M0 0h19L0 10z" fill={light ? "#fff" : "#75a94c"} />
    <path d="M14 5H9Q6 5 6 8v3q0 3 3 3h5" fill="none" stroke={light ? "#2f6122" : "#fff"} strokeWidth="2.800" />
  </svg>
);

const NetworkIcon = () => (
  <svg width="13" height="12" viewBox="0 0 13 12" fill="none" stroke="#eee">
    <path d="M4 2.500h8.500v6H3V5M1 .5h3.500v3H1zM7.500 9v2M5 11.500h5" />
  </svg>
);

const MutedIcon = () => (
  <svg width="13" height="13" viewBox="0 0 13 13">
    <path d="M.5 4.500h2l4-3.500v10l-4-3.500h-2zM8.500 4l1 2" fill="none" stroke="#eee" />
    <circle cx="9.500" cy="9" r="3.500" fill="#e02030" />
    <path d="M8 7.500l3 3M11 7.500l-3 3" stroke="#fff" />
  </svg>
);

const NoticeIcon = () => (
  <svg width="14" height="14" viewBox="0 0 14 14" fill="none" stroke="#eee" strokeWidth="1.200">
    <path d="M1 1h12v9.500H9.500L7 13l-2.500-2.500H1z" />
  </svg>
);

/* ---------- data ---------- */

const schools: [string, number][] = [
  ["Avonworth High School", 22],
  ["Baldwin-Whitehall High School", 9],
  ["Blackhawk High School", 9],
  ["Brentwood Borough School District - High School", 26],
  ["Burgettstown Area Middle/High School", 16],
  ["Butler Senior High School", 21],
  ["Carlynton High School", 5],
  ["Cornell High School", 7],
  ["Franklin Regional Senior High School", 9],
  ["Hampton High School", 5],
  ["Hempfield Area High School", 8],
];

const programs = ["CRCC", "FABLAB & TEA", "FCC", "PRSEF", "SOR", "STARS", "TYF"];

export default function App() {
  const [picked, setPicked] = useState<string[]>(["CRCC"]);
  const toggle = (name: string) =>
    setPicked((now) => (now.includes(name) ? now.filter((n) => n !== name) : [...now, name]));

  return (
    <Window>
      <GlobalStyle />
      <TabBar>
        <Tab>
          <GlobeIcon />
          <TabTitle>CivicMapper</TabTitle>
          <button aria-label="Close tab"><X size={12} strokeWidth={2} /></button>
        </Tab>
        <Tab>
          <DashboardIcon />
          <TabTitle>Operations Dashboard</TabTitle>
          <button aria-label="Close tab"><X size={12} strokeWidth={2} /></button>
        </Tab>
        <Tab $active>
          <DashboardIcon />
          <TabTitle $fade>CSC Program Summary Dashboard</TabTitle>
          <button aria-label="Close tab"><X size={12} strokeWidth={2} /></button>
        </Tab>
        <NewTab aria-label="New tab"><Plus size={15} strokeWidth={2} /></NewTab>
        <Spacer />
        <WindowButton aria-label="Minimize"><Minus size={10} /></WindowButton>
        <WindowButton aria-label="Restore"><RestoreIcon /></WindowButton>
        <WindowButton aria-label="Close"><X size={13} strokeWidth={2} /></WindowButton>
      </TabBar>
      <NavBar>
        <NavButton $dim $ring aria-label="Back"><ArrowLeft size={16} /></NavButton>
        <NavButton $dim aria-label="Forward"><ArrowRight size={16} /></NavButton>
        <NavButton aria-label="Reload"><RotateCw size={14} strokeWidth={2.8} /></NavButton>
        <NavButton aria-label="Home"><HomeIcon /></NavButton>
        <AddressBox>
          <Info size={13} />
          <AddressInput
            aria-label="Address"
            defaultValue="civicmapper.maps.arcgis.com/apps/opsdashboard/index.html#/a291df90e129489a86708ed99345e81a"
          />
          <Ellipsis size={16} strokeWidth={3} />
          <PocketIcon />
          <Star size={15} strokeWidth={2.2} />
        </AddressBox>
        <NavButton aria-label="Library"><LibraryIcon /></NavButton>
        <NavButton aria-label="Sidebars"><SidebarIcon /></NavButton>
        <NavButton aria-label="Markdown"><MarkdownIcon /></NavButton>
        <MenuSlot>
          <NavButton aria-label="Menu"><Menu size={14} strokeWidth={2.6} /></NavButton>
        </MenuSlot>
      </NavBar>

      <Dashboard>
        <FilterPanel>
          <FilterLabel htmlFor="year">Filter by Year</FilterLabel>
          <SelectBox>
            <YearSelect id="year" defaultValue="2016">
              <option>2016</option>
            </YearSelect>
            <DropArrow color="#c4c4c4" />
          </SelectBox>
          <fieldset>
            <FilterLegend>Filter by Program</FilterLegend>
            <CheckList>
              {programs.map((name) => (
                <CheckRow key={name}>
                  <CheckBox type="checkbox" checked={picked.includes(name)} onChange={() => toggle(name)} />
                  {name}
                </CheckRow>
              ))}
            </CheckList>
          </fieldset>
        </FilterPanel>

        <MiddleColumn>
          <TotalPanel>
            <TotalTitle>Total Program Participants</TotalTitle>
            <TotalValue>333</TotalValue>
            <Updated>Last update: a few seconds ago</Updated>
          </TotalPanel>
          <ListPanel>
            <ListArea>
              <SchoolList>
                {schools.map(([name, count]) => (
                  <SchoolRow key={name}>
                    <span>
                      {name}
                      <br />
                      CRCC: {count} Participants
                    </span>
                  </SchoolRow>
                ))}
              </SchoolList>
              <ScrollTrack>
                <ScrollButton aria-label="Scroll up"><ChevronUp size={9} strokeWidth={4} /></ScrollButton>
                <ScrollThumb />
                <Spacer />
                <ScrollButton aria-label="Scroll down"><ChevronDown size={9} strokeWidth={4} /></ScrollButton>
              </ScrollTrack>
            </ListArea>
            <ListNote>
              This list changes as you filter on the left or pan and zoom on the right. Click on one or multiple
              locations to zoom to your selection.
            </ListNote>
            <Updated>Last update: a few seconds ago</Updated>
          </ListPanel>
        </MiddleColumn>

        <Panel>
          <DistrictMap />
          <MapTools>
            <MapTool aria-label="Select"><SelectToolIcon /></MapTool>
            <MapTool aria-label="Selection options"><DropArrow color="#4a4a4a" /></MapTool>
          </MapTools>
          <ScaleBar>6mi</ScaleBar>
          <ZoomBox>
            <button aria-label="Zoom in"><Plus size={15} /></button>
            <button aria-label="Zoom out"><Minus size={15} /></button>
          </ZoomBox>
        </Panel>
      </Dashboard>

      <Taskbar>
        <TaskButton aria-label="Start"><WindowsIcon /></TaskButton>
        <TaskButton aria-label="Search"><Search size={13} transform="scale(-1 1)" /></TaskButton>
        <TaskButton aria-label="Task view"><TaskViewIcon /></TaskButton>
        <TaskButton aria-label="Firefox" $current><FirefoxIcon /></TaskButton>
        <TaskButton aria-label="File Explorer"><FolderIcon /></TaskButton>
        <TaskButton aria-label="ArcGIS"><ArcIcon /></TaskButton>
        <TaskButton aria-label="ArcMap"><GlobeSearchIcon /></TaskButton>
        <TaskButton aria-label="Camtasia" $running><CamtasiaIcon /></TaskButton>
        <TaskButton aria-label="Recorder" $running><CamtasiaIcon light /></TaskButton>
        <Spacer />
        <TrayButton aria-label="Hidden icons"><ChevronUp size={12} /></TrayButton>
        <TrayButton aria-label="Network"><NetworkIcon /></TrayButton>
        <TrayButton aria-label="Volume"><MutedIcon /></TrayButton>
        <Clock>
          11:25 AM
          <br />
          8/29/2018
        </Clock>
        <Notices aria-label="Notifications"><NoticeIcon /></Notices>
      </Taskbar>
    </Window>
  );
}
